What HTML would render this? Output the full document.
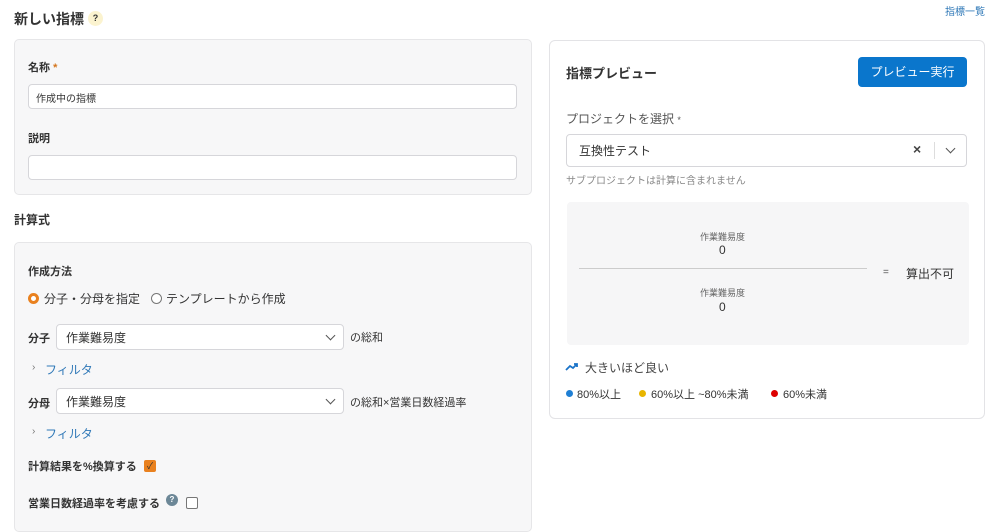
<!DOCTYPE html>
<html><head><meta charset="utf-8"><style>
*{box-sizing:border-box;margin:0;padding:0}
body{width:1000px;height:518px;overflow:hidden;background:#fff;font-family:"Liberation Sans","Noto Sans CJK JP",sans-serif;color:#333;position:relative}
.a{position:absolute;white-space:nowrap}
.panel{position:absolute;background:#f7f7f8;border:1px solid #e6e6e8;border-radius:5px}
.inp{position:absolute;background:#fff;border:1px solid #d6d6da;border-radius:4px}
.b{font-weight:bold}
.lbl{font-size:11px;font-weight:bold;color:#333}
.chev{position:absolute;width:7px;height:7px;border-right:1.6px solid #555;border-bottom:1.6px solid #555;transform:rotate(45deg)}
</style></head><body>
<div class="a b" style="left:14px;top:9px;font-size:14px;color:#333">新しい指標</div>
<div class="a" style="left:88px;top:11px;width:15px;height:15px;border-radius:50%;background:#fbf3cf;font-size:9px;font-weight:bold;text-align:center;line-height:15px;color:#333">?</div>
<div class="a" style="left:945px;top:3px;font-size:10px;color:#2f78b7">指標一覧</div>

<div class="panel" style="left:14px;top:39px;width:518px;height:156px"></div>
<div class="a lbl" style="left:28px;top:59px">名称 <span style="color:#d4751c">*</span></div>
<div class="inp" style="left:28px;top:84px;width:489px;height:25px"></div>
<div class="a" style="left:36px;top:90px;font-size:10px;color:#333">作成中の指標</div>
<div class="a lbl" style="left:28px;top:130px">説明</div>
<div class="inp" style="left:28px;top:155px;width:489px;height:25px"></div>

<div class="a b" style="left:14px;top:211px;font-size:12px">計算式</div>

<div class="panel" style="left:14px;top:242px;width:518px;height:290px"></div>
<div class="a lbl" style="left:28px;top:263px">作成方法</div>
<div class="a" style="left:28px;top:293px;width:11px;height:11px;border-radius:50%;border:3px solid #e9811f;background:#fff"></div>
<div class="a" style="left:44px;top:290px;font-size:12px">分子・分母を指定</div>
<div class="a" style="left:151px;top:293px;width:11px;height:11px;border-radius:50%;border:1px solid #777;background:#fff"></div>
<div class="a" style="left:166px;top:290px;font-size:12px">テンプレートから作成</div>

<div class="a lbl" style="left:28px;top:330px">分子</div>
<div class="inp" style="left:56px;top:324px;width:288px;height:26px"></div>
<div class="a" style="left:66px;top:329px;font-size:12px">作業難易度</div>
<div class="chev" style="left:327px;top:332px"></div>
<div class="a" style="left:350px;top:329px;font-size:11px">の総和</div>
<div class="a" style="left:32px;top:362px;font-size:10px;color:#777">›</div>
<div class="a" style="left:45px;top:361px;font-size:12px;color:#2f78b7">フィルタ</div>

<div class="a lbl" style="left:28px;top:395px">分母</div>
<div class="inp" style="left:56px;top:388px;width:288px;height:26px"></div>
<div class="a" style="left:66px;top:393px;font-size:12px">作業難易度</div>
<div class="chev" style="left:327px;top:396px"></div>
<div class="a" style="left:350px;top:394px;font-size:11px">の総和×営業日数経過率</div>
<div class="a" style="left:32px;top:426px;font-size:10px;color:#777">›</div>
<div class="a" style="left:45px;top:425px;font-size:12px;color:#2f78b7">フィルタ</div>

<div class="a lbl" style="left:28px;top:458px">計算結果を%換算する</div>
<div class="a" style="left:144px;top:460px;width:12px;height:12px;border-radius:2px;background:#e9811f;color:#333;font-size:9px;line-height:12px;text-align:center">✓</div>
<div class="a lbl" style="left:28px;top:495px">営業日数経過率を考慮する</div>
<div class="a" style="left:166px;top:494px;width:12px;height:12px;border-radius:50%;background:#6c8797;color:#fff;font-size:8px;font-weight:bold;text-align:center;line-height:12px">?</div>
<div class="a" style="left:186px;top:497px;width:12px;height:12px;border-radius:2px;border:1px solid #777;background:#fff"></div>

<div class="a" style="left:549px;top:40px;width:436px;height:379px;border:1px solid #e3e3e6;border-radius:6px;background:#fff"></div>
<div class="a b" style="left:566px;top:63px;font-size:13px">指標プレビュー</div>
<div class="a" style="left:858px;top:57px;width:109px;height:30px;border-radius:4px;background:#0a76cc;color:#fff;font-size:12px;text-align:center;line-height:30px">プレビュー実行</div>
<div class="a" style="left:566px;top:110px;font-size:12px;color:#555">プロジェクトを選択 <span style="font-size:9px">*</span></div>
<div class="inp" style="left:566px;top:134px;width:401px;height:33px"></div>
<div class="a" style="left:579px;top:142px;font-size:12px">互換性テスト</div>
<div class="a" style="left:913px;top:141px;font-size:14px;color:#444;font-weight:bold">×</div>
<div class="a" style="left:934px;top:142px;width:1px;height:17px;background:#ddd"></div>
<div class="chev" style="left:947px;top:145px"></div>
<div class="a" style="left:566px;top:172px;font-size:10px;color:#888">サブプロジェクトは計算に含まれません</div>

<div class="a" style="left:567px;top:202px;width:402px;height:143px;background:#f6f6f7;border-radius:4px"></div>
<div class="a" style="left:700px;top:230px;font-size:9px;color:#666">作業難易度</div>
<div class="a" style="left:719px;top:243px;font-size:12px">0</div>
<div class="a" style="left:579px;top:268px;width:288px;height:1px;background:#ccc"></div>
<div class="a" style="left:883px;top:267px;font-size:10px;color:#555">=</div>
<div class="a" style="left:906px;top:265px;font-size:12px">算出不可</div>
<div class="a" style="left:700px;top:286px;font-size:9px;color:#666">作業難易度</div>
<div class="a" style="left:719px;top:300px;font-size:12px">0</div>

<svg class="a" style="left:565px;top:362px" width="14" height="10" viewBox="0 0 14 10"><path d="M1 8 L5 4 L8 6 L12 2 M9 2 H12 V5" fill="none" stroke="#1a73c8" stroke-width="1.8"/></svg>
<div class="a" style="left:585px;top:359px;font-size:12px;color:#444">大きいほど良い</div>
<div class="a" style="left:566px;top:390px;width:7px;height:7px;border-radius:50%;background:#1f7fd4"></div>
<div class="a" style="left:577px;top:386px;font-size:11px">80%以上</div>
<div class="a" style="left:639px;top:390px;width:7px;height:7px;border-radius:50%;background:#e8b500"></div>
<div class="a" style="left:651px;top:386px;font-size:11px">60%以上 ~80%未満</div>
<div class="a" style="left:771px;top:390px;width:7px;height:7px;border-radius:50%;background:#d00"></div>
<div class="a" style="left:783px;top:386px;font-size:11px">60%未満</div>
</body></html>
